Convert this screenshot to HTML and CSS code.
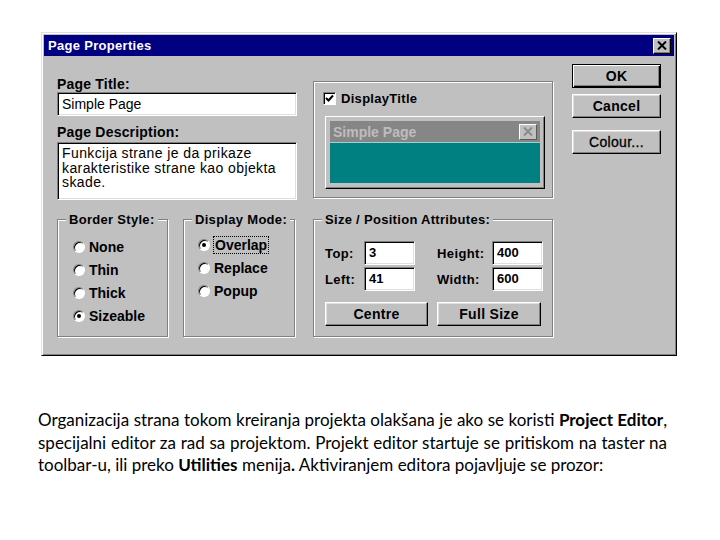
FILE: index.html
```html
<!DOCTYPE html>
<html lang="sr">
<head>
    <meta charset="UTF-8">
    <title>Page Properties</title>
    <link rel="stylesheet" href="styles.css">
</head>
<body>
    <div class="dialog">
        <div class="titlebar">
            <span class="title">Page Properties</span>
            <span class="close-btn">
                <svg width="10" height="9" viewBox="0 0 10 9"><path d="M1 0.5 L9 8.5 M9 0.5 L1 8.5" stroke="#000" stroke-width="2"/></svg>
            </span>
        </div>
        <div class="dialog-body">
            <div class="top-row">
                <div class="page-fields">
                    <div class="field-label">Page Title:</div>
                    <div class="textbox">Simple Page</div>
                    <div class="field-label desc-label">Page Description:</div>
                    <div class="textbox textarea">Funkcija strane je da prikaze<br>karakteristike strane kao objekta<br>skade.</div>
                </div>
                <div class="etched display-box">
                    <div class="check-row">
                        <span class="checkbox">
                            <svg width="9" height="9" viewBox="0 0 9 9"><path d="M1 4 L3.5 6.5 L8 1.5" stroke="#000" stroke-width="2" fill="none"/></svg>
                        </span>
                        <span class="check-text">DisplayTitle</span>
                    </div>
                    <div class="preview">
                        <div class="preview-bar">
                            <span class="preview-title">Simple Page</span>
                            <span class="mini-close">
                                <svg width="10" height="9" viewBox="0 0 10 9"><path d="M1 0.5 L9 8.5 M9 0.5 L1 8.5" stroke="#8a8a8a" stroke-width="2"/></svg>
                            </span>
                        </div>
                        <div class="preview-client"></div>
                    </div>
                </div>
                <div class="buttons">
                    <div class="btn btn-default">OK</div>
                    <div class="btn btn-cancel">Cancel</div>
                    <div class="btn btn-colour">Colour...</div>
                </div>
            </div>

            <div class="bottom-row">
                <div class="etched group border-group">
                    <span class="group-label">Border Style:</span>
                    <div class="radio-row"><span class="radio"></span>None</div>
                    <div class="radio-row"><span class="radio"></span>Thin</div>
                    <div class="radio-row"><span class="radio"></span>Thick</div>
                    <div class="radio-row"><span class="radio checked"></span>Sizeable</div>
                </div>
                <div class="etched group mode-group">
                    <span class="group-label">Display Mode:</span>
                    <div class="radio-row"><span class="radio checked"></span><span class="focus">Overlap</span></div>
                    <div class="radio-row"><span class="radio"></span>Replace</div>
                    <div class="radio-row"><span class="radio"></span>Popup</div>
                </div>
                <div class="etched group size-group">
                    <span class="group-label">Size / Position Attributes:</span>
                    <div class="size-grid">
                        <span class="size-label">Top:</span>
                        <div class="textbox num">3</div>
                        <span class="size-label gap-left">Height:</span>
                        <div class="textbox num">400</div>
                        <span class="size-label">Left:</span>
                        <div class="textbox num">41</div>
                        <span class="size-label gap-left">Width:</span>
                        <div class="textbox num">600</div>
                    </div>
                    <div class="size-buttons">
                        <div class="btn btn-centre">Centre</div>
                        <div class="btn btn-full">Full Size</div>
                    </div>
                </div>
            </div>
        </div>
    </div>

    <p class="caption">
        <span class="line">Organizacija strana tokom kreiranja projekta olakšana je ako se koristi <b>Project Editor</b>,</span>
        <span class="line">specijalni editor za rad sa projektom. Projekt editor startuje se pritiskom na taster na</span>
        <span class="line last">toolbar-u, ili preko <b>Utilities</b> menija<b>.</b> Aktiviranjem editora pojavljuje se prozor:</span>
    </p>
</body>
</html>
```

FILE: styles.css
```css
:root {
    --face: #c0c0c0;
    --shadow: #808080;
    --light: #dfdfdf;
    --navy: #000080;
    --teal: #008080;
}

body {
    margin: 0;
    background: #fff;
    font-family: "Liberation Sans", Arial, sans-serif;
    color: #000;
}

/* ---- window frame ---- */

.dialog {
    box-sizing: border-box;
    width: 636px;
    height: 324px;
    margin: 32px 0 0 41px;
    padding: 2px;
    background: var(--face);
    border: 1px solid;
    border-color: var(--light) #000 #000 var(--light);
    box-shadow: inset 1px 1px #fff, inset -1px -1px var(--shadow);
}

.titlebar {
    height: 21px;
    background: var(--navy);
    display: flex;
    align-items: center;
    justify-content: space-between;
    padding: 0 3px 0 4px;
}

.title {
    color: #fff;
    font-weight: bold;
    font-size: 13px;
    letter-spacing: 0.3px;
}

.close-btn,
.mini-close {
    box-sizing: border-box;
    width: 18px;
    height: 16px;
    display: flex;
    align-items: center;
    justify-content: center;
    background: var(--face);
    border: 1px solid;
    border-color: #fff #000 #000 #fff;
    box-shadow: inset -1px -1px var(--shadow);
}

.dialog-body {
    padding: 0 0 0 13px;
}

/* ---- top part ---- */

.top-row {
    display: flex;
    align-items: flex-start;
    height: 163px;
}

.page-fields {
    width: 240px;
    margin-top: 20px;
}

.field-label {
    font-size: 14px;
    font-weight: bold;
    letter-spacing: 0.2px;
    line-height: 16px;
}

.desc-label {
    margin-top: 8px;
    margin-bottom: 2px;
}

.textbox {
    box-sizing: border-box;
    height: 24px;
    background: #fff;
    border: 1px solid;
    border-color: var(--shadow) #fff #fff var(--shadow);
    box-shadow: inset 1px 1px #000, inset -1px -1px var(--light);
    padding: 3px 4px 0;
    font-size: 14px;
    line-height: 16px;
}

.textarea {
    height: 58px;
    padding-top: 3px;
    line-height: 14.5px;
    letter-spacing: 0.4px;
}

.etched {
    box-sizing: border-box;
    border: 1px solid var(--shadow);
    box-shadow: inset 1px 1px #fff, 1px 1px #fff;
}

.display-box {
    width: 240px;
    height: 117px;
    margin: 25px 0 0 16px;
    padding: 10px 0 0 9px;
}

.check-row {
    display: flex;
    align-items: center;
    gap: 5px;
    height: 13px;
}

.checkbox {
    box-sizing: border-box;
    width: 13px;
    height: 13px;
    display: flex;
    align-items: center;
    justify-content: center;
    background: #fff;
    border: 1px solid;
    border-color: var(--shadow) #fff #fff var(--shadow);
    box-shadow: inset 1px 1px #000;
}

.check-text {
    font-size: 13px;
    font-weight: bold;
    letter-spacing: 0.3px;
}

.preview {
    box-sizing: border-box;
    width: 220px;
    height: 73px;
    margin: 11px 0 0 2px;
    padding: 4px;
    border: 1px solid;
    border-color: #fff #000 #000 #fff;
    box-shadow: inset -1px -1px var(--shadow);
}

.preview-bar {
    height: 21px;
    background: #868686;
    display: flex;
    align-items: center;
    justify-content: space-between;
    padding: 0 3px 0 3px;
    border-bottom: 1px solid #9fd0d0;
}

.preview-title {
    color: #bdbdbd;
    font-size: 14px;
    font-weight: bold;
}

.mini-close {
    width: 18px;
    height: 16px;
    border-color: #fff #5a5a5a #5a5a5a #fff;
    box-shadow: none;
}

.preview-client {
    height: 40px;
    background: var(--teal);
}

.buttons {
    display: flex;
    flex-direction: column;
    width: 89px;
    margin: 8px 0 0 19px;
}

.btn {
    box-sizing: border-box;
    height: 24px;
    display: flex;
    align-items: center;
    justify-content: center;
    background: var(--face);
    border: 1px solid;
    border-color: #fff #000 #000 #fff;
    box-shadow: inset -1px -1px var(--shadow), inset 1px 1px var(--light);
    font-size: 14px;
    font-weight: bold;
    letter-spacing: 0.3px;
}

.btn-default {
    border-color: #000;
    box-shadow: inset 1px 1px #fff, inset -1px -1px #000, inset -2px -2px var(--shadow);
}

.btn-cancel {
    margin-top: 6px;
}

.btn-colour {
    margin-top: 12px;
    font-weight: normal;
    -webkit-text-stroke: 0.3px #000;
}

/* ---- bottom groups ---- */

.bottom-row {
    display: flex;
}

.group {
    position: relative;
    height: 118px;
}

.group-label {
    position: absolute;
    top: -8px;
    left: 8px;
    padding: 0 3px;
    background: var(--face);
    font-size: 13px;
    font-weight: bold;
    letter-spacing: 0.3px;
    line-height: 15px;
}

.border-group {
    width: 111px;
    padding: 15px 0 0 15px;
}

.mode-group {
    width: 112px;
    margin-left: 15px;
    padding: 13px 0 0 14px;
}

.radio-row {
    display: flex;
    align-items: center;
    gap: 4px;
    height: 23px;
    font-size: 14px;
    font-weight: bold;
}

.radio {
    box-sizing: border-box;
    position: relative;
    width: 12px;
    height: 12px;
    border-radius: 50%;
    background: #fff;
    border: 1px solid;
    border-color: var(--shadow) #fff #fff var(--shadow);
    box-shadow: inset 1px 1px #000;
}

.radio.checked::after {
    content: "";
    position: absolute;
    top: 3px;
    left: 3px;
    width: 4px;
    height: 4px;
    border-radius: 50%;
    background: #000;
}

.focus {
    outline: 1px dotted #000;
    padding: 0 1px;
}

.size-group {
    width: 240px;
    margin-left: 18px;
    padding: 21px 0 0 11px;
}

.size-grid {
    display: grid;
    grid-template-columns: 39px 51px 77px 51px;
    row-gap: 2px;
    align-items: center;
}

.size-label {
    font-size: 13px;
    font-weight: bold;
    letter-spacing: 0.4px;
}

.size-label.gap-left {
    margin-left: 22px;
}

.num {
    font-weight: bold;
    font-size: 13px;
}

.size-buttons {
    display: flex;
    gap: 9px;
    margin-top: 11px;
}

.btn-centre {
    width: 103px;
}

.btn-full {
    width: 104px;
}

/* ---- caption text ---- */

.caption {
    width: 629px;
    margin: 53px 0 0 38px;
    font-family: Lato, "Open Sans", sans-serif;
    font-size: 17px;
    line-height: 22.5px;
}

.line {
    display: block;
    text-align: justify;
    text-align-last: justify;
}

.line.last {
    text-align-last: auto;
}
```
